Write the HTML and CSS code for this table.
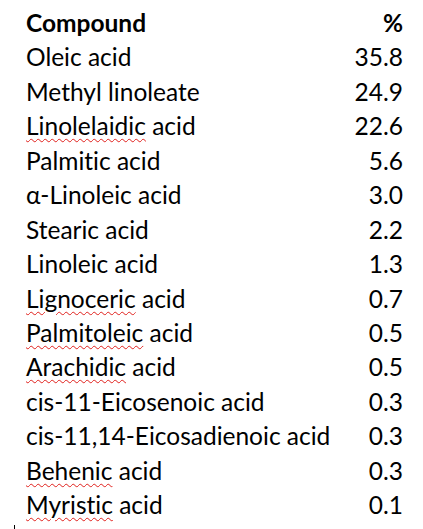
FILE: index.html
```html
<!DOCTYPE html>
<html>
<head>
<meta charset="utf-8">
<link rel="stylesheet" href="styles.css">
</head>
<body>
<div class="table">
  <div class="cell head">Compound</div><div class="num head">%</div>
  <div class="cell">Oleic acid</div><div class="num">35.8</div>
  <div class="cell">Methyl linoleate</div><div class="num">24.9</div>
  <div class="cell"><span class="sp">Linolelaidic</span> acid</div><div class="num">22.6</div>
  <div class="cell">Palmitic acid</div><div class="num">5.6</div>
  <div class="cell">α-Linoleic acid</div><div class="num">3.0</div>
  <div class="cell">Stearic acid</div><div class="num">2.2</div>
  <div class="cell">Linoleic acid</div><div class="num">1.3</div>
  <div class="cell"><span class="sp">Lignoceric</span> acid</div><div class="num">0.7</div>
  <div class="cell"><span class="sp">Palmitoleic</span> acid</div><div class="num">0.5</div>
  <div class="cell"><span class="sp">Arachidic</span> acid</div><div class="num">0.5</div>
  <div class="cell">cis-11-Eicosenoic acid</div><div class="num">0.3</div>
  <div class="cell">cis-11,14-Eicosadienoic acid</div><div class="num">0.3</div>
  <div class="cell"><span class="sp">Behenic</span> acid</div><div class="num">0.3</div>
  <div class="cell"><span class="sp">Myristic</span> acid</div><div class="num">0.1</div>
</div>
<div class="mark"></div>
</body>
</html>
```
FILE: styles.css
```css
html, body {
  margin: 0;
  padding: 0;
  background: #fff;
}
body {
  width: 423px;
  height: 529px;
  overflow: hidden;
  position: relative;
  font-family: "Lato", "Open Sans", sans-serif;
  color: #000;
}
.table {
  display: grid;
  grid-template-columns: 1fr auto;
  padding: 6px 20px 0 26px;
  font-size: 24.5px;
  line-height: 34.43px;
  font-variant-ligatures: none;
}
.head {
  font-weight: bold;
}
.num {
  text-align: right;
}
.sp {
  text-decoration: underline wavy #e0201c;
  text-decoration-thickness: 1px;
  text-underline-offset: 3px;
}
.mark {
  position: absolute;
  left: 14px;
  top: 525px;
  width: 1px;
  height: 4px;
  background: #000;
}
```
